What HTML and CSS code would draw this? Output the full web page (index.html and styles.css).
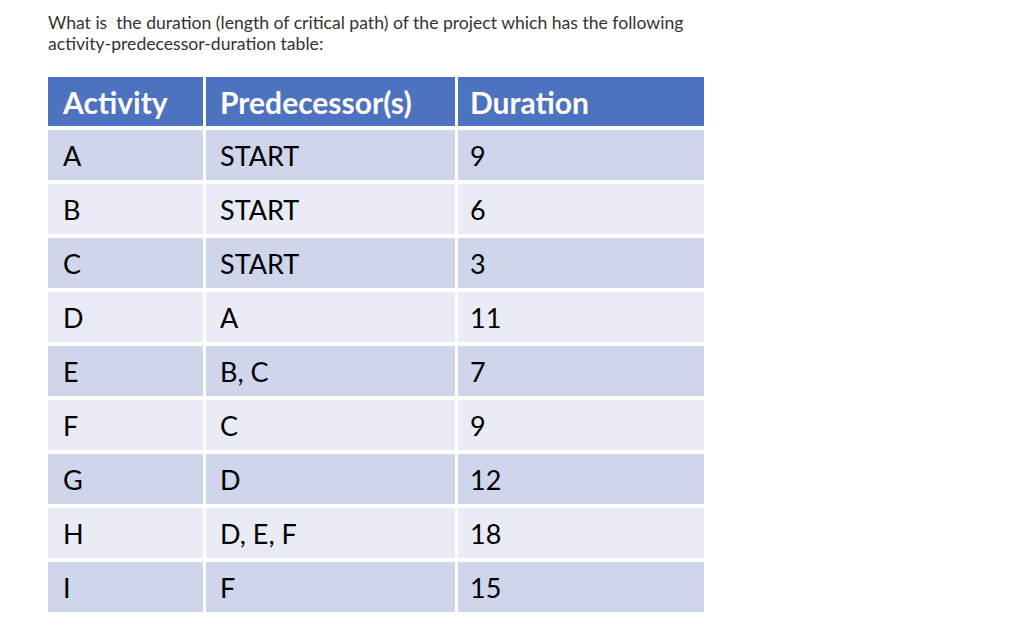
FILE: index.html
```html
<!DOCTYPE html>
<html>
<head>
<meta charset="utf-8">
<link rel="stylesheet" href="styles.css">
</head>
<body>
<div class="page">
  <p class="question">What is &nbsp;the duration (length of critical path) of the project which has the following activity-predecessor-duration table:</p>
  <div class="table">
    <div class="cell head">Activity</div>
    <div class="cell head">Predecessor(s)</div>
    <div class="cell head">Duration</div>

    <div class="cell odd">A</div><div class="cell odd">START</div><div class="cell odd">9</div>
    <div class="cell even">B</div><div class="cell even">START</div><div class="cell even">6</div>
    <div class="cell odd">C</div><div class="cell odd">START</div><div class="cell odd">3</div>
    <div class="cell even">D</div><div class="cell even">A</div><div class="cell even">11</div>
    <div class="cell odd">E</div><div class="cell odd">B, C</div><div class="cell odd">7</div>
    <div class="cell even">F</div><div class="cell even">C</div><div class="cell even">9</div>
    <div class="cell odd">G</div><div class="cell odd">D</div><div class="cell odd">12</div>
    <div class="cell even">H</div><div class="cell even">D, E, F</div><div class="cell even">18</div>
    <div class="cell odd">I</div><div class="cell odd">F</div><div class="cell odd">15</div>
  </div>
</div>
</body>
</html>
```
FILE: styles.css
```css
html, body {
  margin: 0;
  padding: 0;
  background: #ffffff;
}
.page {
  padding: 13px 0 0 48px;
}
.question {
  margin: 0;
  width: 660px;
  font-family: Lato, "Liberation Sans", sans-serif;
  font-size: 17.6px;
  line-height: 20.5px;
  color: #333333;
}
.table {
  margin-top: 23px;
  display: grid;
  grid-template-columns: 155px 249px 246px;
  grid-template-rows: 49px;
  grid-auto-rows: 50px;
  column-gap: 3px;
  row-gap: 4px;
  width: 656px;
}
.cell {
  display: flex;
  align-items: center;
  padding-left: 14px;
  font-family: Lato, "Liberation Sans", sans-serif;
  font-size: 27px;
  color: #000000;
}
.cell:nth-child(3n+1) {
  padding-left: 15px;
}
.cell:nth-child(3n) {
  padding-left: 12px;
}
.head {
  background: #4d72bf;
  color: #ffffff;
  font-weight: 700;
  font-size: 30px;
}
.odd {
  background: #cfd5ea;
}
.even {
  background: #e9ebf5;
}
```
